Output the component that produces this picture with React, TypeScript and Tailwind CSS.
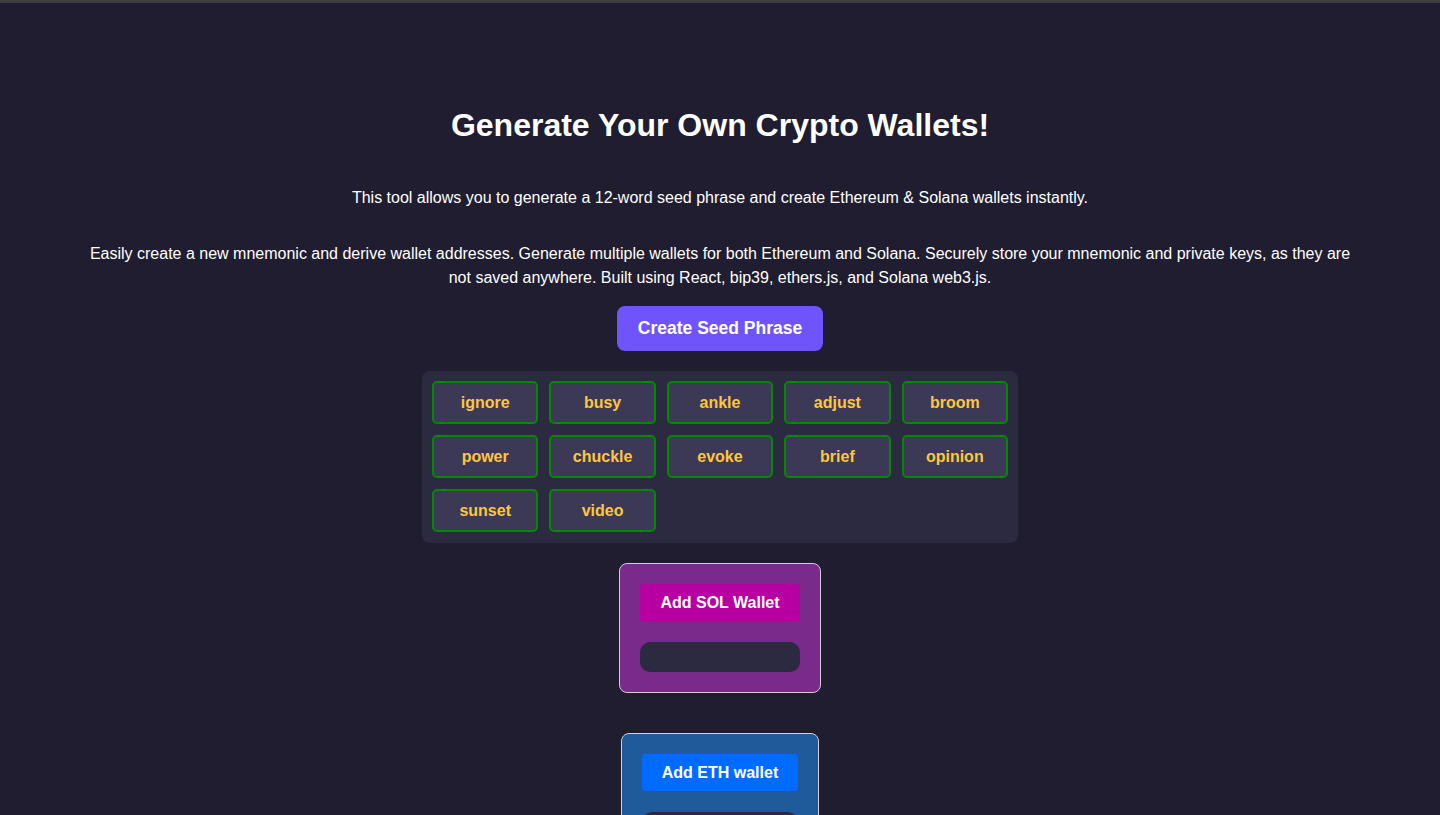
import React from "react";

const words = [
  "ignore", "busy", "ankle", "adjust", "broom",
  "power", "chuckle", "evoke", "brief", "opinion",
  "sunset", "video",
];

function WalletCard({
  label,
  cardBg,
  buttonBg,
}: {
  label: string;
  cardBg: string;
  buttonBg: string;
}) {
  return (
    <div className={`inline-flex flex-col items-stretch p-5 border border-[#cfcfd4] rounded-lg ${cardBg}`}>
      <button className={`h-[37px] px-5 rounded-[4px] text-white font-bold text-[16px] ${buttonBg}`}>
        {label}
      </button>
      <div className="mt-[21px] h-[30px] rounded-[10px] bg-[#2c2a40]" />
    </div>
  );
}

export default function App() {
  return (
    <div
      className="min-h-[815px] bg-[#1f1d2f] text-white"
      style={{ fontFamily: '"Liberation Sans", Arial, Helvetica, sans-serif' }}
    >
      <div className="h-[3px] bg-[#3d3d42]" />
      <main className="flex flex-col items-center px-20 pt-[104px] text-center">
        {/* Header */}
        <h1 className="text-[32px] leading-[37px] font-bold">Generate Your Own Crypto Wallets!</h1>
        <p className="mt-[42px] text-[16px] leading-6">
          This tool allows you to generate a 12-word seed phrase and create Ethereum &amp; Solana wallets instantly.
        </p>
        <p className="mt-8 text-[16px] leading-6">
          Easily create a new mnemonic and derive wallet addresses. Generate multiple wallets for both Ethereum and
          Solana. Securely store your mnemonic and private keys, as they are not saved anywhere. Built using React,
          bip39, ethers.js, and Solana web3.js.
        </p>

        <button className="mt-[16px] h-[45px] px-[21px] rounded-lg bg-[#7054fb] text-white font-bold text-[17.5px]">
          Create Seed Phrase
        </button>

        {/* Seed phrase grid */}
        <div className="mt-5 w-[596px] grid grid-cols-5 gap-[11px] px-[10px] pt-[10px] pb-[11px] rounded-lg bg-[#2c2a40]">
          {words.map((w) => (
            <div
              key={w}
              className="h-[43px] flex items-center justify-center rounded-[5px] border-2 border-[#008a00] bg-[#3c3956] text-[#fcc73f] font-bold text-[16px]"
            >
              {w}
            </div>
          ))}
        </div>

        {/* Wallets */}
        <div className="mt-5">
          <WalletCard label="Add SOL Wallet" cardBg="bg-[#7a2a8a]" buttonBg="bg-[#b800a2]" />
        </div>
        <div className="mt-[40px] pb-10">
          <WalletCard label="Add ETH wallet" cardBg="bg-[#1f5b9b]" buttonBg="bg-[#006bff]" />
        </div>
      </main>
    </div>
  );
}
